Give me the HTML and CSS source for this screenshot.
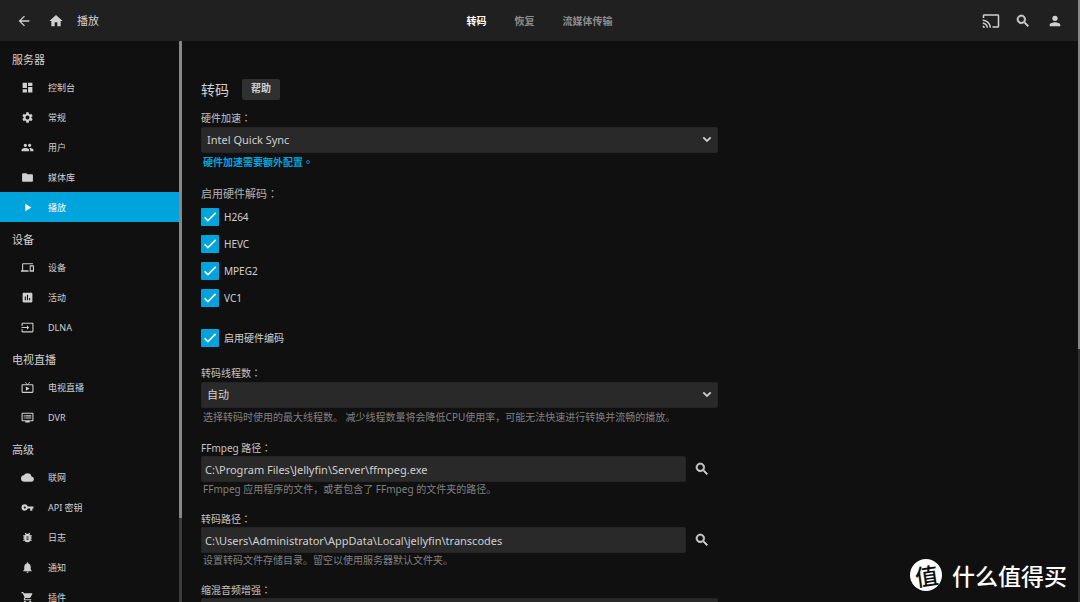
FILE: index.html
```html
<!DOCTYPE html>
<html lang="zh-CN">
<head>
<meta charset="utf-8">
<meta name="viewport" content="width=device-width, initial-scale=1">
<title>播放</title>
<link rel="stylesheet" href="styles.css">
</head>
<body>
<header class="topbar">
  <div class="topbar-left">
    <button class="icon-btn" type="button" aria-label="返回"><svg class="icon" viewBox="0 0 24 24"><path d="M20 11H7.830l5.590-5.590L12 4l-8 8 8 8 1.410-1.410L7.830 13H20z"/></svg></button>
    <button class="icon-btn" type="button" aria-label="首页"><svg class="icon" viewBox="0 0 24 24"><path d="M10 20v-6h4v6h5v-8h3L12 3 2 12h3v8z"/></svg></button>
    <h1 class="topbar-title">播放</h1>
  </div>
  <nav class="tabs">
    <a class="tab tab-active" href="#">转码</a>
    <a class="tab" href="#">恢复</a>
    <a class="tab" href="#">流媒体传输</a>
  </nav>
  <div class="topbar-right">
    <button class="icon-btn" type="button" aria-label="投射"><svg class="icon icon-cast" viewBox="0 0 24 24"><path d="M21 3H3c-1.100 0-2 .9-2 2v3h2V5h18v14h-7v2h7c1.100 0 2-.9 2-2V5c0-1.100-.9-2-2-2zM1 18v3h3c0-1.660-1.340-3-3-3zm0-4v2c2.760 0 5 2.240 5 5h2c0-3.870-3.130-7-7-7zm0-4v2c4.970 0 9 4.030 9 9h2c0-6.080-4.930-11-11-11z"/></svg></button>
    <button class="icon-btn" type="button" aria-label="搜索"><svg class="icon icon-bold" viewBox="0 0 24 24"><path d="M15.500 14h-.79l-.28-.27A6.470 6.470 0 0 0 16 9.500 6.500 6.500 0 1 0 9.500 16c1.610 0 3.090-.59 4.230-1.570l.27.28v.79l5 4.990L20.490 19zm-6 0a4.500 4.500 0 1 1 0-9 4.500 4.500 0 0 1 0 9z"/></svg></button>
    <button class="icon-btn" type="button" aria-label="用户"><svg class="icon" viewBox="0 0 24 24"><path d="M12 12a4 4 0 1 0 0-8 4 4 0 0 0 0 8zm0 2c-2.670 0-8 1.340-8 4v2h16v-2c0-2.660-5.330-4-8-4z"/></svg></button>
  </div>
</header>

<div class="layout">
  <aside class="sidebar">
    <nav class="menu">
      <h2 class="menu-heading">服务器</h2>
      <a class="menu-item" href="#"><svg class="menu-icon" viewBox="0 0 24 24"><path d="M3 13h8V3H3zm0 8h8v-6H3zm10 0h8V11h-8zm0-18v6h8V3z"/></svg><span>控制台</span></a>
      <a class="menu-item" href="#"><svg class="menu-icon" viewBox="0 0 24 24"><path d="M19.140 12.940c.04-.3.060-.61.060-.94 0-.32-.02-.64-.07-.94l2.030-1.580a.49.49 0 0 0 .12-.61l-1.920-3.320a.49.49 0 0 0-.59-.22l-2.390.96a7 7 0 0 0-1.620-.94l-.36-2.540a.48.48 0 0 0-.48-.41h-3.840a.47.47 0 0 0-.47.41l-.36 2.540c-.59.24-1.130.57-1.620.94l-2.390-.96a.48.48 0 0 0-.59.22L2.740 8.870a.47.47 0 0 0 .12.61l2.030 1.580c-.05.3-.09.63-.09.94s.02.64.07.94l-2.030 1.580a.49.49 0 0 0-.12.61l1.920 3.320c.12.22.37.29.59.22l2.390-.96c.5.38 1.030.7 1.620.94l.36 2.540c.05.24.24.41.48.41h3.840c.24 0 .44-.17.47-.41l.36-2.540c.59-.24 1.130-.56 1.620-.94l2.390.96c.22.080.47 0 .59-.22l1.920-3.320a.47.47 0 0 0-.12-.61zM12 15.600a3.600 3.600 0 1 1 0-7.200 3.600 3.600 0 0 1 0 7.200z"/></svg><span>常规</span></a>
      <a class="menu-item" href="#"><svg class="menu-icon" viewBox="0 0 24 24"><path d="M16 11c1.660 0 2.990-1.340 2.990-3S17.660 5 16 5s-3 1.340-3 3 1.340 3 3 3zm-8 0c1.660 0 2.990-1.340 2.990-3S9.660 5 8 5 5 6.340 5 8s1.340 3 3 3zm0 2c-2.330 0-7 1.170-7 3.500V19h14v-2.500C15 14.170 10.330 13 8 13zm8 0c-.29 0-.62.020-.97.050 1.160.84 1.970 1.970 1.970 3.450V19h6v-2.500c0-2.330-4.670-3.500-7-3.500z"/></svg><span>用户</span></a>
      <a class="menu-item" href="#"><svg class="menu-icon" viewBox="0 0 24 24"><path d="M10 4H4c-1.100 0-2 .9-2 2v12c0 1.100.9 2 2 2h16c1.100 0 2-.9 2-2V8c0-1.100-.9-2-2-2h-8z"/></svg><span>媒体库</span></a>
      <a class="menu-item menu-item-active" href="#"><svg class="menu-icon" viewBox="0 0 24 24"><path d="M8 5v14l11-7z"/></svg><span>播放</span></a>
      <h2 class="menu-heading">设备</h2>
      <a class="menu-item" href="#"><svg class="menu-icon" viewBox="0 0 24 24"><path d="M4 6h18V4H4c-1.100 0-2 .9-2 2v11H0v3h14v-3H4zm19 2h-6c-.55 0-1 .45-1 1v10c0 .55.45 1 1 1h6c.55 0 1-.45 1-1V9c0-.55-.45-1-1-1zm-1 9h-4v-7h4z"/></svg><span>设备</span></a>
      <a class="menu-item" href="#"><svg class="menu-icon" viewBox="0 0 24 24"><path d="M19 3H5c-1.100 0-2 .9-2 2v14c0 1.100.9 2 2 2h14c1.100 0 2-.9 2-2V5c0-1.100-.9-2-2-2zM9 17H7v-7h2zm4 0h-2V7h2zm4 0h-2v-4h2z"/></svg><span>活动</span></a>
      <a class="menu-item" href="#"><svg class="menu-icon" viewBox="0 0 24 24"><path d="M21 3H3c-1.100 0-2 .9-2 2v4h2V5h18v14H3v-4H1v4c0 1.100.9 2 2 2h18c1.100 0 2-.9 2-2V5c0-1.100-.9-2-2-2zM11 16l4-4-4-4v3H1v2h10z"/></svg><span>DLNA</span></a>
      <h2 class="menu-heading">电视直播</h2>
      <a class="menu-item" href="#"><svg class="menu-icon" viewBox="0 0 24 24"><path d="M21 6h-7.590l3.290-3.290L16 2l-4 4-4-4-.71.71L10.590 6H3c-1.100 0-2 .89-2 2v12c0 1.100.9 2 2 2h18c1.100 0 2-.9 2-2V8c0-1.110-.9-2-2-2zm0 14H3V8h18zM9 10v8l7-4z"/></svg><span>电视直播</span></a>
      <a class="menu-item" href="#"><svg class="menu-icon" viewBox="0 0 24 24"><path d="M21 3H3c-1.100 0-2 .9-2 2v12c0 1.100.9 2 2 2h5v2h8v-2h5c1.100 0 2-.9 2-2V5c0-1.100-.9-2-2-2zm0 14H3V5h18zm-2-9H8v2h11zm0 4H8v2h11zM7 8H5v2h2zm0 4H5v2h2z"/></svg><span>DVR</span></a>
      <h2 class="menu-heading">高级</h2>
      <a class="menu-item" href="#"><svg class="menu-icon" viewBox="0 0 24 24"><path d="M19.350 10.040A7.490 7.490 0 0 0 12 4C9.110 4 6.600 5.640 5.350 8.040A6 6 0 0 0 6 20h13a5 5 0 0 0 .35-9.960z"/></svg><span>联网</span></a>
      <a class="menu-item" href="#"><svg class="menu-icon" viewBox="0 0 24 24"><path d="M12.650 10A6 6 0 0 0 7 6a6 6 0 1 0 0 12 6 6 0 0 0 5.650-4H17v4h4v-4h2v-4zM7 14a2 2 0 1 1 0-4 2 2 0 0 1 0 4z"/></svg><span>API 密钥</span></a>
      <a class="menu-item" href="#"><svg class="menu-icon" viewBox="0 0 24 24"><path d="M20 8h-2.810a5.980 5.980 0 0 0-1.820-1.960L17 4.410 15.590 3l-2.170 2.170a6 6 0 0 0-2.830 0L8.410 3 7 4.410l1.620 1.630C7.880 6.550 7.260 7.220 6.810 8H4v2h2.090C6.040 10.330 6 10.660 6 11v1H4v2h2v1c0 .34.040.67.090 1H4v2h2.810a6 6 0 0 0 10.380 0H20v-2h-2.090c.05-.33.09-.66.09-1v-1h2v-2h-2v-1c0-.34-.04-.67-.09-1H20zm-6 8h-4v-2h4zm0-4h-4v-2h4z"/></svg><span>日志</span></a>
      <a class="menu-item" href="#"><svg class="menu-icon" viewBox="0 0 24 24"><path d="M12 22a2 2 0 0 0 2-2h-4a2 2 0 0 0 2 2zm6-6v-5c0-3.070-1.640-5.640-4.500-6.320V4a1.500 1.500 0 0 0-3 0v.68C7.630 5.360 6 7.920 6 11v5l-2 2v1h16v-1z"/></svg><span>通知</span></a>
      <a class="menu-item" href="#"><svg class="menu-icon" viewBox="0 0 24 24"><path d="M7 18a2 2 0 1 0 0 4 2 2 0 0 0 0-4zM1 2v2h2l3.600 7.590-1.350 2.450C4.520 15.370 5.480 17 7 17h12v-2H7.420a.25.25 0 0 1-.25-.25l.93-1.750h7.450c.75 0 1.410-.41 1.750-1.030l3.580-6.490A1 1 0 0 0 20 4H5.210l-.94-2zm16 16a2 2 0 1 0 0 4 2 2 0 0 0 0-4z"/></svg><span>插件</span></a>
    </nav>
    <div class="scroll-track"><div class="scroll-thumb"></div></div>
  </aside>

  <main class="content">
    <form class="form">
      <div class="title-row">
        <h2 class="page-title">转码</h2>
        <button class="help-btn" type="button">帮助</button>
      </div>

      <div class="field">
        <label class="label" for="accel">硬件加速<span class="mid" lang="zh-TW">：</span></label>
        <div class="select-wrap">
          <select class="control" id="accel"><option>Intel Quick Sync</option></select>
          <svg class="chevron" viewBox="0 0 24 24"><path d="M7.410 7L12 11.580 16.590 7 18.500 9 12 15.500 5.500 9z"/></svg>
        </div>
        <a class="hint hint-link" href="#">硬件加速需要额外配置<span class="mid" lang="zh-TW">。</span></a>
      </div>

      <fieldset class="checks">
        <legend class="legend">启用硬件解码<span class="mid" lang="zh-TW">：</span></legend>
        <label class="check"><input type="checkbox" checked><span>H264</span></label>
        <label class="check"><input type="checkbox" checked><span>HEVC</span></label>
        <label class="check"><input type="checkbox" checked><span>MPEG2</span></label>
        <label class="check"><input type="checkbox" checked><span>VC1</span></label>
      </fieldset>

      <label class="check check-single"><input type="checkbox" checked><span>启用硬件编码</span></label>

      <div class="field">
        <label class="label" for="threads">转码线程数<span class="mid" lang="zh-TW">：</span></label>
        <div class="select-wrap">
          <select class="control" id="threads"><option>自动</option></select>
          <svg class="chevron" viewBox="0 0 24 24"><path d="M7.410 7L12 11.580 16.590 7 18.500 9 12 15.500 5.500 9z"/></svg>
        </div>
        <p class="hint">选择转码时使用的最大线程数。 减少线程数量将会降低CPU使用率，可能无法快速进行转换并流畅的播放。</p>
      </div>

      <div class="field">
        <label class="label" for="ffmpeg">FFmpeg 路径<span class="mid" lang="zh-TW">：</span></label>
        <div class="path-row">
          <input class="control" id="ffmpeg" type="text" value="C:\Program Files\Jellyfin\Server\ffmpeg.exe">
          <button class="icon-btn" type="button" aria-label="浏览"><svg class="icon icon-bold" viewBox="0 0 24 24"><path d="M15.500 14h-.79l-.28-.27A6.470 6.470 0 0 0 16 9.500 6.500 6.500 0 1 0 9.500 16c1.610 0 3.090-.59 4.230-1.570l.27.28v.79l5 4.990L20.490 19zm-6 0a4.500 4.500 0 1 1 0-9 4.500 4.500 0 0 1 0 9z"/></svg></button>
        </div>
        <p class="hint hint-tight">FFmpeg 应用程序的文件，或者包含了 FFmpeg 的文件夹的路径。</p>
      </div>

      <div class="field">
        <label class="label" for="transcodes">转码路径<span class="mid" lang="zh-TW">：</span></label>
        <div class="path-row">
          <input class="control" id="transcodes" type="text" value="C:\Users\Administrator\AppData\Local\jellyfin\transcodes">
          <button class="icon-btn" type="button" aria-label="浏览"><svg class="icon icon-bold" viewBox="0 0 24 24"><path d="M15.500 14h-.79l-.28-.27A6.470 6.470 0 0 0 16 9.500 6.500 6.500 0 1 0 9.500 16c1.610 0 3.090-.59 4.230-1.570l.27.28v.79l5 4.990L20.490 19zm-6 0a4.500 4.500 0 1 1 0-9 4.500 4.500 0 0 1 0 9z"/></svg></button>
        </div>
        <p class="hint hint-tight">设置转码文件存储目录。留空以使用服务器默认文件夹。</p>
      </div>

      <div class="field">
        <label class="label" for="downmix">缩混音频增强<span class="mid" lang="zh-TW">：</span></label>
        <input class="control" id="downmix" type="text">
      </div>
    </form>
  </main>
</div>

<div class="page-scroll"><div class="page-thumb"></div></div>
<div class="watermark"><span class="watermark-badge"><span class="watermark-glyph">值</span></span><span>什么值得买</span></div>
</body>
</html>
```
FILE: styles.css
```css
* {
  box-sizing: border-box;
}

body {
  margin: 0;
  height: 100vh;
  overflow: hidden;
  display: flex;
  flex-direction: column;
  background: #101010;
  color: #d0d0d0;
  font-family: "Noto Sans", "Noto Sans CJK SC", sans-serif;
  font-size: 10px;
  line-height: 16px;
}

h1,
h2,
p {
  margin: 0;
  font-weight: 400;
}

a {
  color: inherit;
  text-decoration: none;
}

button,
input,
select {
  font: inherit;
  color: inherit;
}

svg {
  display: block;
  fill: currentColor;
}

.mid {
  font-family: "Noto Sans CJK TC", sans-serif;
}

/* Top bar */

.topbar {
  flex: none;
  display: grid;
  grid-template-columns: 1fr auto 1fr;
  align-items: center;
  height: 41px;
  padding: 0 17px 0 16px;
  background: #202020;
}

.topbar-left,
.topbar-right {
  display: flex;
  align-items: center;
  gap: 16px;
}

.topbar-right {
  justify-content: flex-end;
}

.topbar-title {
  margin-left: -3px;
  font-size: 11px;
}

.icon-btn {
  display: flex;
  align-items: center;
  justify-content: center;
  width: 16px;
  height: 16px;
  padding: 0;
  border: 0;
  background: none;
}

.icon {
  flex: none;
  width: 16px;
  height: 16px;
}

.icon-cast {
  width: 18px;
  height: 18px;
}

.icon-bold {
  stroke: currentColor;
  stroke-width: 1;
}

.tabs {
  display: flex;
  gap: 28px;
}

.tab {
  color: #8e8e8e;
  font-weight: 700;
}

.tab-active {
  color: #fff;
}

/* Side menu */

.layout {
  flex: 1;
  min-height: 0;
  display: flex;
}

.sidebar {
  flex: none;
  display: flex;
  width: 182px;
}

.menu {
  flex: 1;
  overflow: hidden;
  padding-top: 1px;
}

.menu-heading {
  height: 30px;
  padding: 10px 12px 0;
  font-size: 11px;
}

.menu-item {
  display: flex;
  align-items: center;
  gap: 14px;
  height: 30px;
  padding-left: 21px;
  font-size: 9px;
}

.menu-item span {
  padding-top: 2px;
}

.menu-item-active {
  background: #00a4dc;
  color: #fff;
}

.menu-icon {
  width: 13px;
  height: 13px;
}

.scroll-track {
  width: 3px;
  background: #3b3b3b;
}

.scroll-thumb {
  height: 85%;
  border-radius: 1px;
  background: #888;
}

/* Settings form */

.content {
  flex: 1;
  min-width: 0;
  overflow: hidden;
  padding: 38px 19px 0;
}

.form {
  max-width: 517px;
}

.title-row {
  display: flex;
  align-items: center;
  gap: 13px;
  margin-bottom: 10px;
}

.page-title {
  font-size: 14px;
}

.help-btn {
  height: 21px;
  padding: 0 9px 3px;
  border: 0;
  border-radius: 2px;
  background: #303030;
  font-weight: 700;
}

.field {
  display: flex;
  flex-direction: column;
  margin-bottom: 15px;
}

.label {
  color: #c4c4c4;
}

.control {
  width: 100%;
  height: 26px;
  margin: 0;
  padding: 0 3px;
  border: 1px solid #242424;
  border-radius: 2px;
  background: #292929;
  font-size: 11px;
  outline: 0;
  appearance: none;
}

.select-wrap {
  display: grid;
  align-items: center;
  margin-top: 1px;
}

.select-wrap > * {
  grid-area: 1 / 1;
}

.select-wrap .control {
  padding: 0 5px 1px;
}

.chevron {
  justify-self: end;
  width: 16px;
  height: 16px;
  margin-right: 3px;
  pointer-events: none;
}

.hint {
  margin-top: 1px;
  padding-left: 2px;
  color: #808080;
}

.hint-tight {
  margin-top: 0;
  line-height: 14px;
}

.hint-link {
  color: #00a4dc;
  font-weight: 700;
}

.path-row {
  display: flex;
  align-items: center;
  gap: 8px;
  padding-right: 8px;
}

.checks {
  display: flex;
  flex-direction: column;
  gap: 9px;
  margin: 0 0 22px;
  padding: 0;
  border: 0;
}

.legend {
  margin: 3px 0 6px;
  padding: 0;
  color: #b0b0b0;
  font-size: 11px;
}

.check {
  display: flex;
  align-items: center;
  gap: 5px;
  height: 18px;
}

.check input {
  display: grid;
  place-items: center;
  width: 18px;
  height: 18px;
  margin: 0;
  border-radius: 1px;
  background: #00a4dc;
  appearance: none;
}

.check input:checked::before {
  content: "";
  width: 16px;
  height: 16px;
  background: #fff;
  clip-path: polygon(37% 65%, 20% 48%, 13% 56%, 37% 80%, 89% 28%, 82% 20%);
}

.check-single {
  margin-bottom: 18px;
}

/* Page scrollbar */

.page-scroll {
  position: absolute;
  top: 0;
  right: 0;
  bottom: 0;
  width: 2px;
  background: #303030;
}

.page-thumb {
  height: 58%;
  background: #888;
}

/* Watermark */

.watermark {
  position: absolute;
  right: 13px;
  bottom: 11px;
  display: flex;
  align-items: center;
  gap: 10px;
  color: #fff;
  font-family: "Noto Sans CJK SC", sans-serif;
  font-size: 23px;
  font-weight: 500;
  line-height: 32px;
}

.watermark-badge {
  display: grid;
  place-items: center;
  width: 32px;
  height: 32px;
  border-radius: 50%;
  background: #fff;
  color: #101010;
}

.watermark-glyph {
  transform: rotate(-8deg);
}
```
